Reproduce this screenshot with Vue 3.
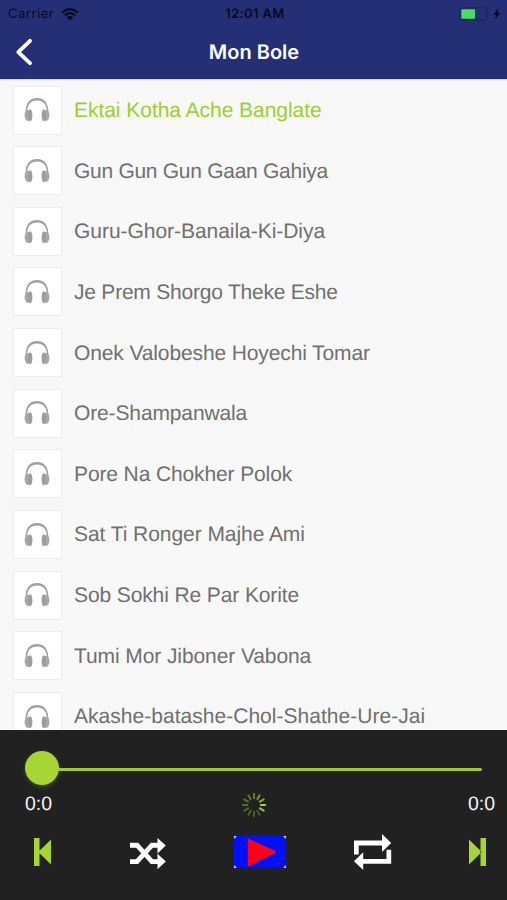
<script setup>
const songs = [
  { title: 'Ektai Kotha Ache Banglate', tracking: -0.04 },
  { title: 'Gun Gun Gun Gaan Gahiya', tracking: -0.28 },
  { title: 'Guru-Ghor-Banaila-Ki-Diya', tracking: -0.04 },
  { title: 'Je Prem Shorgo Theke Eshe', tracking: -0.22 },
  { title: 'Onek Valobeshe Hoyechi Tomar', tracking: -0.12 },
  { title: 'Ore-Shampanwala', tracking: -0.13 },
  { title: 'Pore Na Chokher Polok', tracking: -0.12 },
  { title: 'Sat Ti Ronger Majhe Ami', tracking: -0.06 },
  { title: 'Sob Sokhi Re Par Korite', tracking: -0.11 },
  { title: 'Tumi Mor Jiboner Vabona', tracking: -0.09 },
  { title: 'Akashe-batashe-Chol-Shathe-Ure-Jai', tracking: 0.03 },
]
const current = 0
const spokes = [0.5, 0.65, 0.8, 1, 0.95, 0.3, 0.33, 0.36, 0.4, 0.43, 0.46, 0.48]
</script>

<template>
  <div class="screen">
    <header class="header">
      <div class="status">
        <div class="carrier">
          <span class="carrier-name">Carrier</span>
          <svg class="wifi" width="18" height="13" viewBox="0 0 18 13">
            <path d="M1.2 4.6Q9-2.2 16.8 4.6M3.9 7.4Q9 3 14.1 7.4" fill="none" stroke="#060a20" stroke-width="2.1" />
            <path d="M5.8 9.2Q9 6.6 12.2 9.2L9 12.4Z" fill="#060a20" />
          </svg>
        </div>
        <span class="clock">12:01 AM</span>
        <svg class="battery" width="43" height="14" viewBox="0 0 43 14">
          <rect x="0.9" y="0.8" width="27.2" height="12.4" rx="3.2" fill="none" stroke="#1a2259" stroke-width="1" />
          <rect x="2.3" y="2.3" width="13.7" height="9.4" rx="1" fill="#4bdb63" />
          <path d="M29.7 4.8q2 2.2 0 4.4z" fill="#1a2259" />
          <path d="M39.5 1.3 34.3 7.7h3L36 12.5l5.4-6.6h-3.1z" fill="#060a20" />
        </svg>
      </div>
      <div class="navbar">
        <svg class="back" width="18" height="28" viewBox="0 0 18 28">
          <path d="M15 2.8 3.3 14.1 15 25.2" fill="none" stroke="#fff" stroke-width="3.8" stroke-linecap="round" stroke-linejoin="round" />
        </svg>
        <h1 class="title">Mon Bole</h1>
      </div>
    </header>

    <ul class="songs">
      <li v-for="(song, i) in songs" :key="song.title" class="song" :class="{ active: i === current }">
        <div class="thumb">
          <svg class="headphones" width="26" height="25" viewBox="0 0 26 25">
            <path d="M1.7 16C1.2 5.5 6.2 1 13 1s11.8 4.5 11.3 15l-1.2-1C22.5 7.2 19.2 3.6 13 3.6S3.5 7.2 2.9 15z" fill="#a0a0a0" />
            <ellipse cx="3.9" cy="18.3" rx="3.3" ry="5.6" fill="#a8a8a8" />
            <ellipse cx="22.1" cy="18.3" rx="3.3" ry="5.6" fill="#a8a8a8" />
            <ellipse cx="6.2" cy="18.3" rx="2.2" ry="6" fill="#9d9d9d" />
            <ellipse cx="19.8" cy="18.3" rx="2.2" ry="6" fill="#9d9d9d" />
          </svg>
        </div>
        <span class="name" :style="{ letterSpacing: song.tracking + 'px' }">{{ song.title }}</span>
      </li>
    </ul>

    <footer class="player">
      <div class="slider">
        <span class="knob"></span>
        <span class="track"></span>
      </div>
      <div class="times">
        <span>0:0</span>
        <svg class="spinner" width="26" height="26" viewBox="-13 -13 26 26">
          <line
            v-for="(o, i) in spokes"
            :key="i"
            x1="0" y1="-6.8" x2="0" y2="-11.2"
            stroke="#a4d233" stroke-width="2" stroke-linecap="round"
            :opacity="o"
            :transform="`rotate(${i * 30})`"
          />
        </svg>
        <span class="total">0:0</span>
      </div>
      <div class="controls">
        <svg width="17" height="28" viewBox="0 0 17 28" fill="#a6d534">
          <path d="M0 0h5.5v28H0zM17 1.5v25L4.2 14z" />
        </svg>
        <svg class="shuffle" width="36" height="32" viewBox="0 0 36 32">
          <path d="M0 7.2h7L22 23.6h7M0 23.6h7L22 7.2h7" fill="none" stroke="#fff" stroke-width="4.9" />
          <path d="M27.5 0 35.8 7.6 27.5 15.4zM27.5 15.8 35.8 23.6 27.5 31.2z" fill="#fff" />
        </svg>
        <svg width="52" height="32" viewBox="0 0 52 32">
          <rect width="52" height="32" fill="#0010ff" />
          <path d="M14.8 3.8 41 16 14.8 29z" fill="#ff0018" stroke="#ff0018" stroke-width="2" stroke-linejoin="round" />
          <path d="M0 0h2.4v1.2H1.2v1.2H0zM52 0h-2.4v1.2h1.2v1.2H52zM0 32h2.4v-1.2H1.2v-1.2H0zM52 32h-2.4v-1.2h1.2v-1.2H52z" fill="#c8c8d8" />
        </svg>
        <svg width="38" height="36" viewBox="0 0 38 36" fill="#fff">
          <path d="M0 20.4V6.5h28V0l9.2 9-9.2 9v-6.5H4.7v8.9z" />
          <path d="M37.2 15.8v14h-28v6.2L0 27.2l9.2-9v6.7h23.3v-9.1z" />
        </svg>
        <svg width="17" height="28" viewBox="0 0 17 28" fill="#a6d534">
          <path d="M11.5 0H17v28h-5.5zM0 1.5v25L12.8 14z" />
        </svg>
      </div>
    </footer>
  </div>
</template>

<style>
body {
  margin: 0;
}
</style>

<style scoped>
.screen {
  display: flex;
  flex-direction: column;
  width: 507px;
  height: 900px;
  overflow: hidden;
  background: #f8f8f8;
  font-family: "Liberation Sans", Arial, sans-serif;
  text-rendering: geometricPrecision;
}
.header {
  flex: none;
  box-sizing: border-box;
  height: 79px;
  background: #242f75;
  box-shadow: 0 1px 1px #d8daea;
}
.status {
  display: grid;
  grid-template-columns: 1fr auto 1fr;
  align-items: center;
  height: 27px;
  padding: 0 5px 0 8px;
  font: 500 13px/27px Inter, sans-serif;
  color: #060a20;
}
.carrier {
  display: flex;
  align-items: center;
  gap: 7px;
}
.carrier-name {
  padding-top: 1px;
  font-weight: 400;
  letter-spacing: 0.5px;
}
.clock {
  padding-top: 1px;
  font-weight: 600;
  letter-spacing: 0.35px;
}
.battery {
  justify-self: end;
}
.navbar {
  display: grid;
  grid-template-columns: 60px 1fr 60px;
  align-items: center;
  height: 50px;
}
.back {
  margin-left: 15px;
}
.title {
  margin: 0;
  padding: 0 0 0 1px;
  text-align: center;
  color: #fff;
  font: 600 20px/28px Inter, sans-serif;
}
.songs {
  flex: 1;
  min-height: 0;
  margin: 0;
  padding: 0.7px 0 0 13px;
  overflow: hidden;
  list-style: none;
}
.song {
  display: flex;
  align-items: center;
  gap: 12px;
  height: 60.65px;
  color: #707070;
}
.song.active {
  color: #9bd02f;
}
.thumb {
  display: flex;
  align-items: center;
  justify-content: center;
  box-sizing: border-box;
  width: 49px;
  height: 49px;
  border: 1px solid #ececec;
  background: #fff;
}
.headphones {
  margin: 0 0.5px 0.5px 0;
}
.name {
  padding-top: 2px;
  font-size: 21px;
  line-height: 28px;
  white-space: nowrap;
}
.player {
  flex: none;
  box-sizing: border-box;
  height: 170px;
  padding-top: 21px;
  background: #212121;
}
.slider {
  display: flex;
  align-items: center;
  height: 34px;
  padding: 0 25px;
}
.knob {
  width: 34px;
  height: 34px;
  border-radius: 50%;
  background: #a6d534;
  box-shadow: 0 2px 4px rgba(130, 180, 30, 0.3);
}
.track {
  flex: 1;
  height: 3px;
  margin-top: 3px;
  border-radius: 0 2px 2px 0;
  background: #a0cc32;
}
.times {
  display: grid;
  grid-template-columns: 1fr auto 1fr;
  align-items: center;
  height: 38px;
  padding: 1px 12px 0 25px;
  box-sizing: border-box;
  color: #f4f4f4;
  font-size: 19.5px;
}
.spinner {
  margin-right: 13px;
}
.total {
  text-align: right;
}
.controls {
  display: grid;
  grid-template-columns: 96px 104px 119.5px 115.5px 17px;
  align-items: center;
  height: 58px;
  padding-left: 34px;
}
.shuffle {
  margin-top: 3px;
}
</style>
